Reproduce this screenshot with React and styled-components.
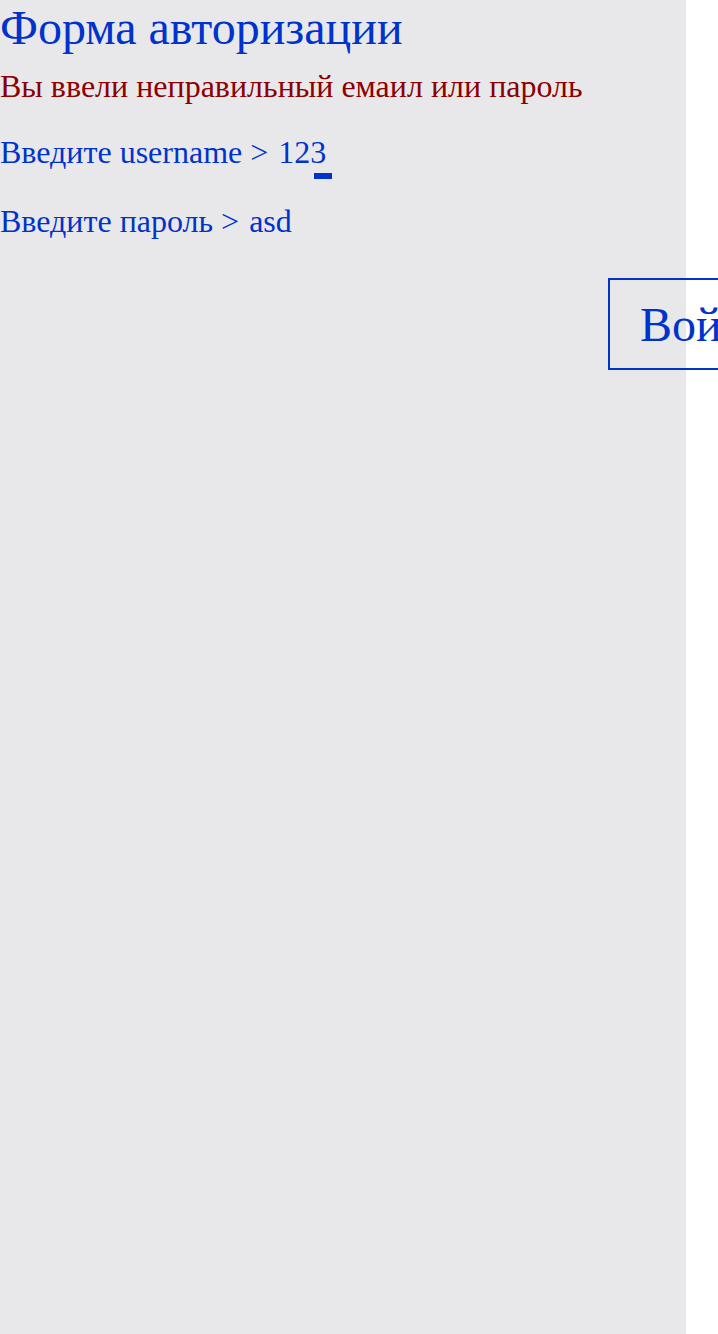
import React from "react";
import styled, { createGlobalStyle } from "styled-components";

const Global = createGlobalStyle`
  html, body {
    margin: 0;
    padding: 0;
    background: #ffffff;
  }
  body {
    font-family: "Liberation Serif", "Times New Roman", serif;
  }
`;

const Page = styled.div`
  width: 686px;
  min-height: 1334px;
  background: #e8e8ea;
  color: #0033cc;
`;

const Title = styled.h1`
  margin: 0;
  font-size: 48px;
  font-weight: normal;
  line-height: 55px;
`;

const Error = styled.div`
  color: #8b0000;
  font-size: 32px;
  line-height: 62px;
  margin-bottom: 18px;
`;

const Field = styled.label`
  display: block;
  font-size: 32px;
  line-height: 34px;
  margin-bottom: 35px;
`;

const Value = styled.span`
  position: relative;
  margin-left: 2px;
`;

const Cursor = styled.span`
  position: absolute;
  right: -6px;
  bottom: -9px;
  width: 18px;
  height: 6px;
  background: #0033cc;
`;

const Actions = styled.div`
  display: flex;
  padding: 5px 0 0 608px;
`;

const Submit = styled.button`
  flex-shrink: 0;
  margin: 0;
  padding: 0 30px;
  height: 92px;
  background: transparent;
  border: 2px solid #0033cc;
  color: #0033cc;
  font-family: "Liberation Serif", "Times New Roman", serif;
  font-size: 48px;
  white-space: nowrap;
`;

export default function App() {
  return (
    <>
      <Global />
      <Page>
        <Title>Форма авторизации</Title>
        <Error>Вы ввели неправильный емаил или пароль</Error>
        <Field>
          Введите username &gt; <Value>123<Cursor /></Value>
        </Field>
        <Field>
          Введите пароль &gt; <Value>asd</Value>
        </Field>
        <Actions>
          <Submit>Войти</Submit>
        </Actions>
      </Page>
    </>
  );
}
